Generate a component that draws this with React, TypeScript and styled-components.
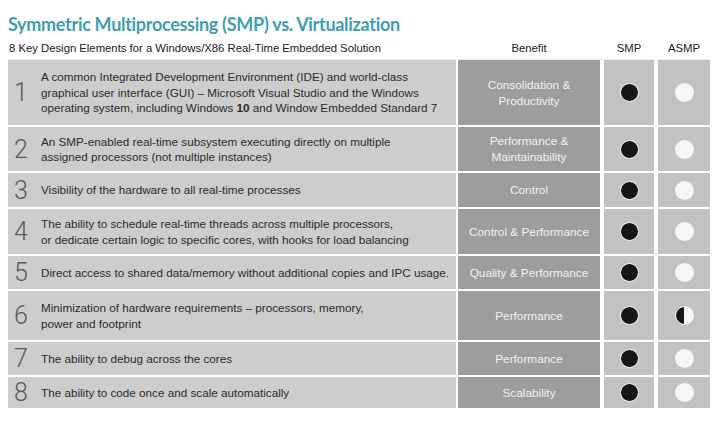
import React from "react";
import styled, { createGlobalStyle } from "styled-components";

const Global = createGlobalStyle`
  html, body { margin: 0; padding: 0; background: #ffffff; }
  body { font-family: "Liberation Sans", Arial, sans-serif; }
`;

const Page = styled.div`
  width: 720px;
  height: 421px;
  padding: 12px 0 0 8px;
  box-sizing: border-box;
  background: #fff;
`;

const Title = styled.h1`
  margin: 0;
  font-family: "Lato", "Open Sans", sans-serif;
  font-weight: 700;
  font-size: 18px;
  line-height: 25px;
  color: #3f9db2;
  letter-spacing: -0.3px;
`;

const HeaderRow = styled.div`
  display: grid;
  grid-template-columns: 448px 2px 142px 4px 50px 4px 52px;
  height: 22px;
  align-items: center;
  font-size: 11.3px;
  color: #222;
`;

const Subtitle = styled.div`
  padding-left: 1px;
  grid-column: 1;
`;

const HeadCell = styled.div<{ $col: number }>`
  grid-column: ${(p) => p.$col};
  text-align: center;
`;

const Table = styled.div`
  display: flex;
  flex-direction: column;
  gap: 2px;
  border-top: 1px solid #ececec;
  width: 702px;
`;

const Row = styled.div<{ $h: number }>`
  display: grid;
  grid-template-columns: 448px 2px 142px 4px 50px 4px 52px;
  height: ${(p) => p.$h}px;
`;

const Gap = styled.div``;

const MainCell = styled.div`
  background: #cdcdcd;
  display: flex;
  align-items: center;
`;

const Num = styled.div`
  width: 26px;
  flex: none;
  text-align: center;
  font-family: "Roboto", sans-serif;
  font-weight: 300;
  font-size: 25px;
  color: #5a5a5a;
  margin-right: 7px;
`;

const Desc = styled.div`
  font-size: 11.7px;
  line-height: 15.5px;
  color: #2b2b2b;
  white-space: nowrap;
`;

const BenefitCell = styled.div`
  background: #9d9d9d;
  color: #f2f2f2;
  font-size: 11.8px;
  line-height: 16px;
  display: flex;
  align-items: center;
  justify-content: center;
  text-align: center;
`;

const DotCell = styled.div`
  background: #c2c2c2;
  display: flex;
  align-items: center;
  justify-content: center;
`;

const Dot = styled.div<{ $kind: "full" | "empty" | "half" }>`
  width: 19px;
  height: 19px;
  box-sizing: border-box;
  border-radius: 50%;
  border: ${(p) => (p.$kind === "empty" ? "none" : "1.5px solid #fafafa")};
  background: ${(p) =>
    p.$kind === "full"
      ? "#161616"
      : p.$kind === "empty"
      ? "#f6f6f6"
      : "linear-gradient(90deg, #161616 50%, #f6f6f6 50%)"};
`;

type Item = {
  n: number;
  h: number;
  text: React.ReactNode;
  benefit: React.ReactNode;
  asmp: "full" | "empty" | "half";
};

const items: Item[] = [
  {
    n: 1,
    h: 65,
    text: (
      <>
        A common Integrated Development Environment (IDE) and world-class
        <br />
        graphical user interface (GUI) – Microsoft Visual Studio and the Windows
        <br />
        operating system, including Windows <b>10</b> and Window Embedded Standard 7
      </>
    ),
    benefit: (
      <>
        Consolidation &amp;
        <br />
        Productivity
      </>
    ),
    asmp: "empty",
  },
  {
    n: 2,
    h: 44,
    text: (
      <>
        An SMP-enabled real-time subsystem executing directly on multiple
        <br />
        assigned processors (not multiple instances)
      </>
    ),
    benefit: (
      <>
        Performance &amp;
        <br />
        Maintainability
      </>
    ),
    asmp: "empty",
  },
  { n: 3, h: 34, text: "Visibility of the hardware to all real-time processes", benefit: "Control", asmp: "empty" },
  {
    n: 4,
    h: 45,
    text: (
      <>
        The ability to schedule real-time threads across multiple processors,
        <br />
        or dedicate certain logic to specific cores, with hooks for load balancing
      </>
    ),
    benefit: "Control & Performance",
    asmp: "empty",
  },
  {
    n: 5,
    h: 33,
    text: "Direct access to shared data/memory without additional copies and IPC usage.",
    benefit: "Quality & Performance",
    asmp: "empty",
  },
  {
    n: 6,
    h: 49,
    text: (
      <>
        Minimization of hardware requirements – processors, memory,
        <br />
        power and footprint
      </>
    ),
    benefit: "Performance",
    asmp: "half",
  },
  { n: 7, h: 33, text: "The ability to debug across the cores", benefit: "Performance", asmp: "empty" },
  { n: 8, h: 31, text: "The ability to code once and scale automatically", benefit: "Scalability", asmp: "empty" },
];

export default function App() {
  return (
    <Page>
      <Global />
      <Title>Symmetric Multiprocessing (SMP) vs. Virtualization</Title>
      <HeaderRow>
        <Subtitle>8 Key Design Elements for a Windows/X86 Real-Time Embedded Solution</Subtitle>
        <HeadCell $col={3}>Benefit</HeadCell>
        <HeadCell $col={5}>SMP</HeadCell>
        <HeadCell $col={7}>ASMP</HeadCell>
      </HeaderRow>
      <Table>
        {items.map((it) => (
          <Row key={it.n} $h={it.h}>
            <MainCell>
              <Num>{it.n}</Num>
              <Desc>{it.text}</Desc>
            </MainCell>
            <Gap />
            <BenefitCell>{it.benefit}</BenefitCell>
            <Gap />
            <DotCell>
              <Dot $kind="full" />
            </DotCell>
            <Gap />
            <DotCell>
              <Dot $kind={it.asmp} />
            </DotCell>
          </Row>
        ))}
      </Table>
    </Page>
  );
}
